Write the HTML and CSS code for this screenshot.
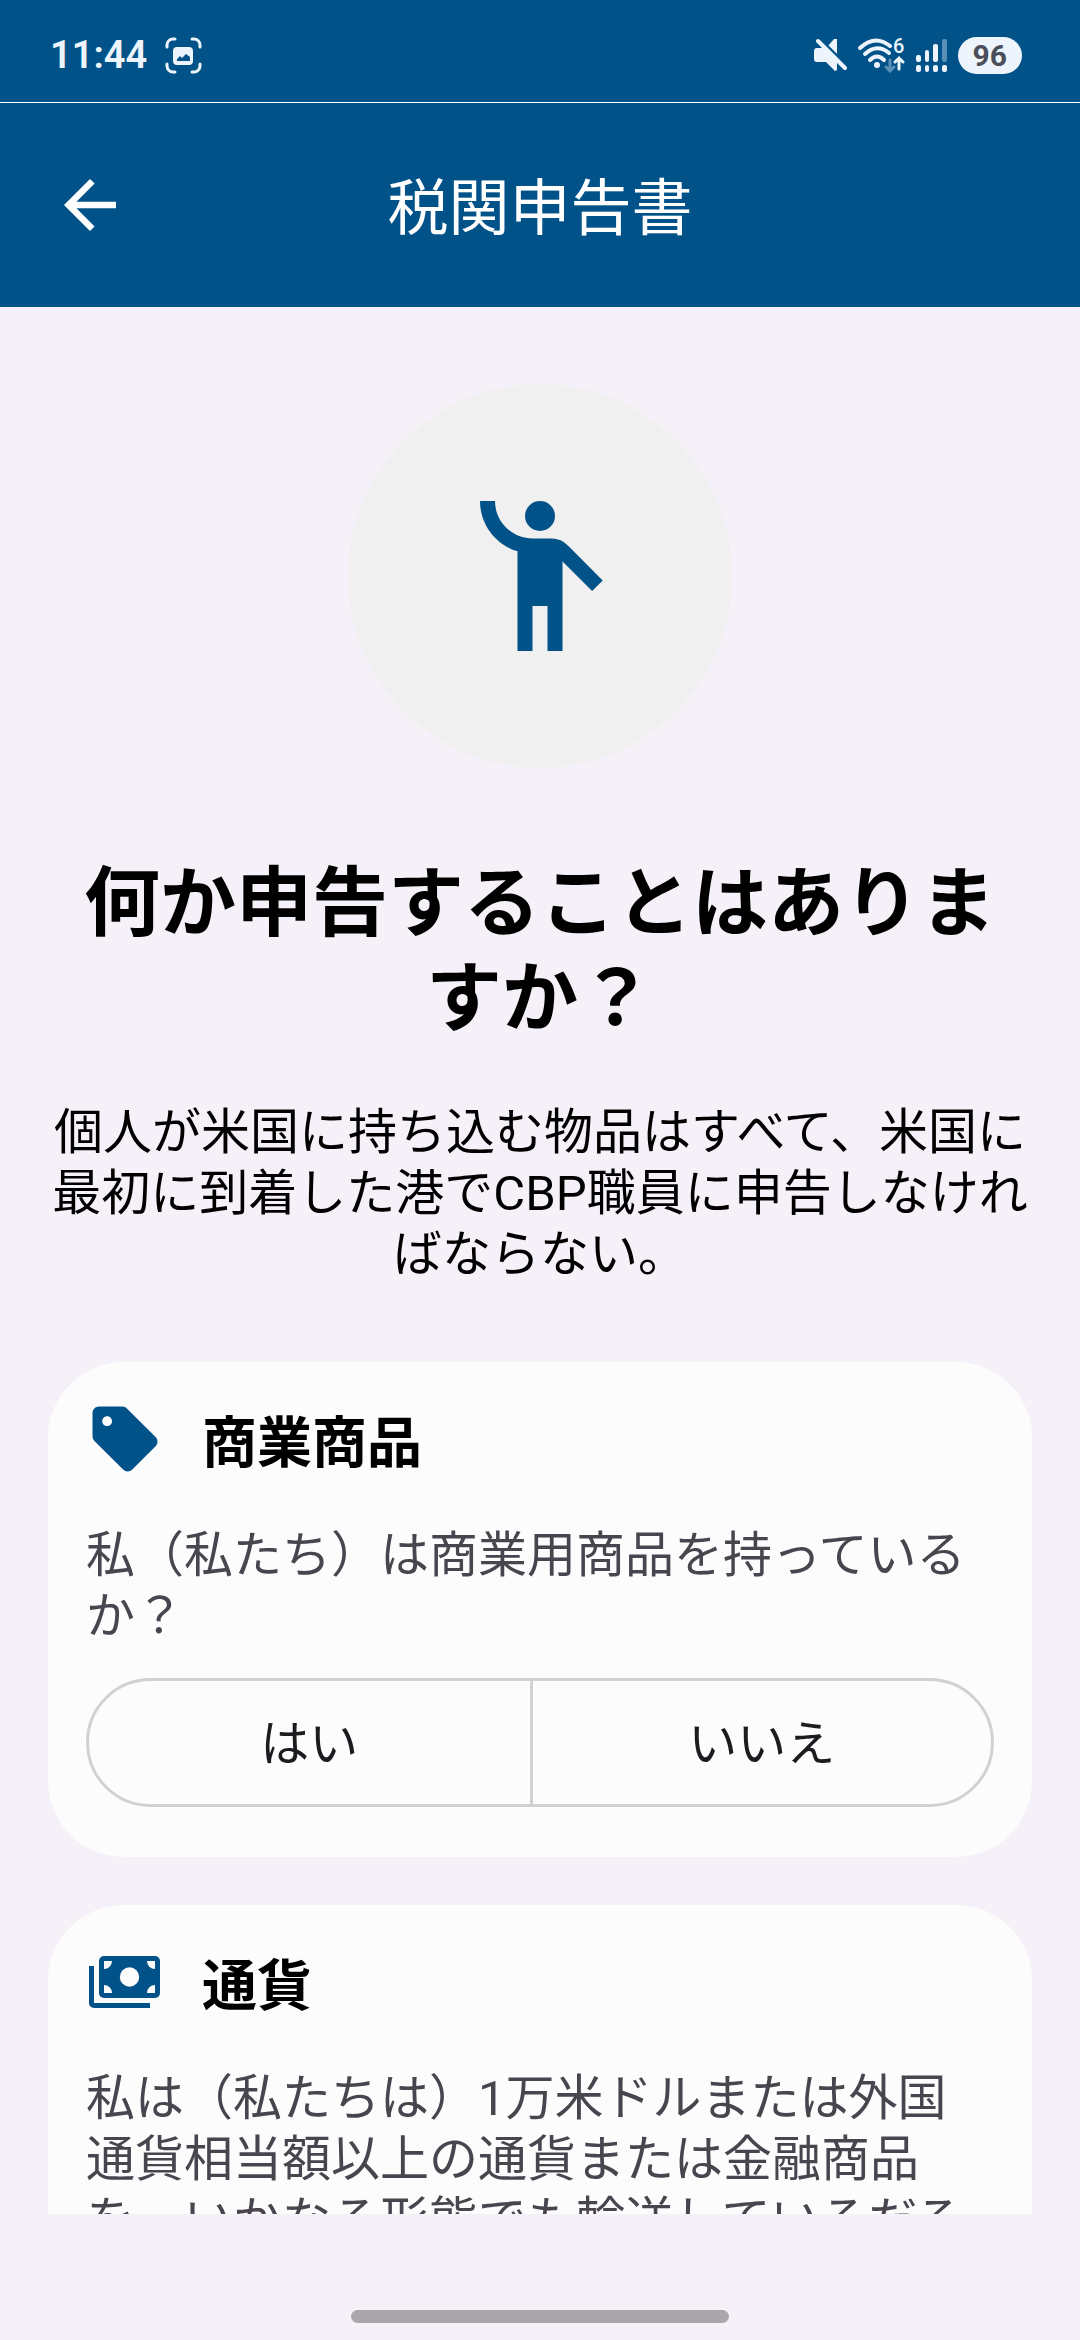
FILE: index.html
```
<!DOCTYPE html>
<html lang="ja">
<head>
    <meta charset="UTF-8">
    <meta name="viewport" content="width=device-width, initial-scale=1.0">
    <title>税関申告書</title>
    <link rel="stylesheet" href="styles.css">
</head>
<body>
    <div class="status-bar">
        <div class="status-left">
            <span class="clock">11:44</span>
            <svg class="status-icon" width="37" height="37" viewBox="0 0 37 37" aria-hidden="true">
                <path d="M2 10V8a6 6 0 0 1 6-6h2M27 2h2a6 6 0 0 1 6 6v2M35 27v2a6 6 0 0 1-6 6h-2M10 35H8a6 6 0 0 1-6-6v-2" fill="none" stroke="currentColor" stroke-width="3" stroke-linecap="round"/>
                <path fill-rule="evenodd" d="M12 10h12a4 4 0 0 1 4 4v10a4 4 0 0 1-4 4H12a4 4 0 0 1-4-4V14a4 4 0 0 1 4-4zM12 24h13v-4l-4-3-4 4-2-2-3 3z" fill="currentColor"/>
            </svg>
        </div>
        <div class="status-right">
            <svg class="status-icon" width="33" height="34" viewBox="0 0 33 34" aria-hidden="true">
                <path d="M3 10h6l14 14v8l-2 1-9-9H3a3 3 0 0 1-3-3v-8a3 3 0 0 1 3-3zM14 8l6-7h3v16z" fill="currentColor"/>
                <path d="M6 1l27 27" stroke="#005288" stroke-width="3"/>
                <path d="M4 3l27 27" stroke="currentColor" stroke-width="4" stroke-linecap="round"/>
            </svg>
            <svg class="status-icon" width="47" height="35" viewBox="0 0 47 35" aria-hidden="true">
                <g fill="none" stroke="currentColor" stroke-width="4" stroke-linecap="round">
                    <path d="M2 10Q17-4 32 8"/>
                    <path d="M7 16Q19 5 31 15"/>
                    <path d="M12 22Q19 15 26 22"/>
                </g>
                <circle cx="19" cy="27" r="3" fill="currentColor"/>
                <path d="M32 22v11M28 29l4 4 4-4" fill="none" stroke="#5a90b8" stroke-width="3" stroke-linecap="round"/>
                <path d="M41 31V20M37 24l4-4 4 4" fill="none" stroke="currentColor" stroke-width="3" stroke-linecap="round"/>
                <text class="wifi-gen" x="35" y="15">6</text>
            </svg>
            <svg class="status-icon" width="31" height="34" viewBox="0 0 31 34" aria-hidden="true">
                <g fill="currentColor">
                    <rect x="0" y="17" width="5" height="7" rx="2"/>
                    <rect x="9" y="12" width="4" height="12" rx="2"/>
                    <rect x="17" y="6" width="5" height="18" rx="2"/>
                    <rect x="0" y="27" width="5" height="7" rx="2"/>
                    <rect x="9" y="27" width="4" height="7" rx="2"/>
                    <rect x="17" y="27" width="5" height="7" rx="2"/>
                    <rect x="26" y="27" width="5" height="7" rx="2"/>
                </g>
                <rect x="26" y="1" width="5" height="23" rx="2" fill="#5a90b8"/>
            </svg>
            <span class="battery">96</span>
        </div>
    </div>

    <header class="app-bar">
        <button class="back-button" type="button" aria-label="戻る">
            <svg width="78" height="78" viewBox="0 0 24 24" aria-hidden="true">
                <path d="M20 11H7.830l5.590-5.590L12 4l-8 8 8 8 1.410-1.410L7.830 13H20v-2z" fill="currentColor"/>
            </svg>
        </button>
        <h1>税関申告書</h1>
    </header>

    <main class="content">
        <div class="hero-icon">
            <svg width="180" height="180" viewBox="0 0 24 24" aria-hidden="true">
                <circle cx="12" cy="4" r="2" fill="currentColor"/>
                <path d="M15.890 8.110C15.500 7.720 14.830 7 13.530 7h-2.540C8.240 6.990 6 4.750 6 2H4c0 3.160 2.110 5.840 5 6.710V22h2v-6h2v6h2V10.050L18.950 14l1.410-1.410-4.470-4.480z" fill="currentColor"/>
            </svg>
        </div>
        <h2 class="question">何か申告することはありますか？</h2>
        <p class="intro">個人が米国に持ち込む物品はすべて、米国に最初に到着した港でCBP職員に申告しなければならない。</p>

        <section class="card">
            <div class="card-header">
                <svg width="78" height="78" viewBox="0 0 24 24" aria-hidden="true">
                    <path d="M21.410 11.410l-8.830-8.830C12.210 2.210 11.700 2 11.170 2H4c-1.100 0-2 .9-2 2v7.170c0 .53.21 1.040.59 1.410l8.830 8.830c.78.78 2.050.78 2.830 0l7.170-7.170c.78-.78.78-2.040-.01-2.830zM6.500 8C5.670 8 5 7.330 5 6.500S5.670 5 6.500 5 8 5.670 8 6.500 7.330 8 6.500 8z" fill="currentColor"/>
                </svg>
                <h3>商業商品</h3>
            </div>
            <p class="card-text">私（私たち）は商業用商品を持っているか？</p>
            <div class="answers">
                <button type="button">はい</button>
                <button type="button">いいえ</button>
            </div>
        </section>

        <section class="card">
            <div class="card-header">
                <svg width="78" height="78" viewBox="0 0 78 78" aria-hidden="true">
                    <path d="M3 23h5v37h56v5H8a5 5 0 0 1-5-5z" fill="currentColor"/>
                    <rect x="13" y="13" width="61" height="42" rx="5" fill="currentColor"/>
                    <g fill="#fcfcfc">
                        <circle cx="43.500" cy="34" r="9.700"/>
                        <path d="M18 18h8a8 8 0 0 1-8 8zM69 18v8a8 8 0 0 1-8-8zM18 50v-8a8 8 0 0 1 8 8zM69 50h-8a8 8 0 0 1 8-8z"/>
                    </g>
                </svg>
                <h3>通貨</h3>
            </div>
            <p class="card-text">私は（私たちは）1万米ドルまたは外国通貨相当額以上の通貨または金融商品を、いかなる形態でも輸送しているだろうか？</p>
            <div class="answers">
                <button type="button">はい</button>
                <button type="button">いいえ</button>
            </div>
        </section>
    </main>

    <div class="nav-bar"><div class="nav-handle"></div></div>
</body>
</html>
```

FILE: styles.css
```
* {
    margin: 0;
    padding: 0;
    box-sizing: border-box;
}
body {
    display: flex;
    flex-direction: column;
    height: 100vh;
    background: #f6f1f8;
    color: #000;
    font-family: Roboto, "Noto Sans CJK JP", sans-serif;
    font-size: 49px;
    line-height: 61px;
}
svg { display: block; flex: none; }
button { font: inherit; background: none; border: 0; cursor: pointer; }

/* status bar */
.status-bar {
    display: flex;
    justify-content: space-between;
    align-items: center;
    height: 103px;
    padding: 8px 58px 0 50px;
    background: #005288;
    border-bottom: 1px solid #fff;
    color: #edf4fb;
}
.status-left { display: flex; align-items: center; gap: 18px; }
.status-right { display: flex; align-items: center; gap: 11px; }
.clock { font-size: 38px; font-weight: 600; line-height: 40px; }
.wifi-gen { font-size: 20px; font-weight: 500; fill: currentColor; }
.battery {
    padding: 0 15px;
    border-radius: 19px;
    background: #edf4fb;
    color: #4a4e5a;
    font-size: 30px;
    font-weight: 700;
    line-height: 37px;
}

/* app bar */
.app-bar {
    display: grid;
    grid-template-columns: 78px 1fr 78px;
    align-items: center;
    height: 204px;
    padding: 0 51px;
    background: #005288;
    color: #fff;
    flex: none;
}
.back-button { color: #fff; }
.app-bar h1 { padding-top: 8px; font-size: 61px; font-weight: 400; line-height: 76px; text-align: center; }

/* scrolling content */
.content {
    flex: 1;
    min-height: 0;
    padding: 77px 48px 0;
    overflow-y: auto;
    scrollbar-width: none;
}
.hero-icon {
    display: flex;
    align-items: center;
    justify-content: center;
    width: 384px;
    height: 384px;
    margin: 0 auto 89px;
    border-radius: 50%;
    background: #f0f0f0;
    color: #005288;
}
.question {
    margin-bottom: 55px;
    padding: 0 32px;
    font-size: 76px;
    font-weight: 700;
    line-height: 95px;
    text-align: center;
}
.intro { margin-bottom: 77px; text-align: center; }

.card {
    margin-bottom: 48px;
    padding: 38px 38px 50px;
    border-radius: 76px;
    background: #fcfcfc;
}
.card-header { display: flex; align-items: center; gap: 38px; margin-bottom: 47px; color: #005288; }
.card-header h3 { padding-top: 8px; font-size: 55px; font-weight: 700; color: #000; }
.card-text { margin-bottom: 31px; color: #49454f; }
.answers {
    display: grid;
    grid-template-columns: 21fr 22fr;
    height: 129px;
    border: 3px solid #d3d0d3;
    border-radius: 65px;
}
.answers button { padding-top: 4px; color: #1c1b1f; }
.answers button + button { border-left: 3px solid #d3d0d3; }

.nav-bar { display: flex; flex: none; justify-content: center; height: 126px; padding-top: 96px; }
.nav-handle { width: 35%; height: 13px; border-radius: 7px; background: #a9a7ac; }
```
